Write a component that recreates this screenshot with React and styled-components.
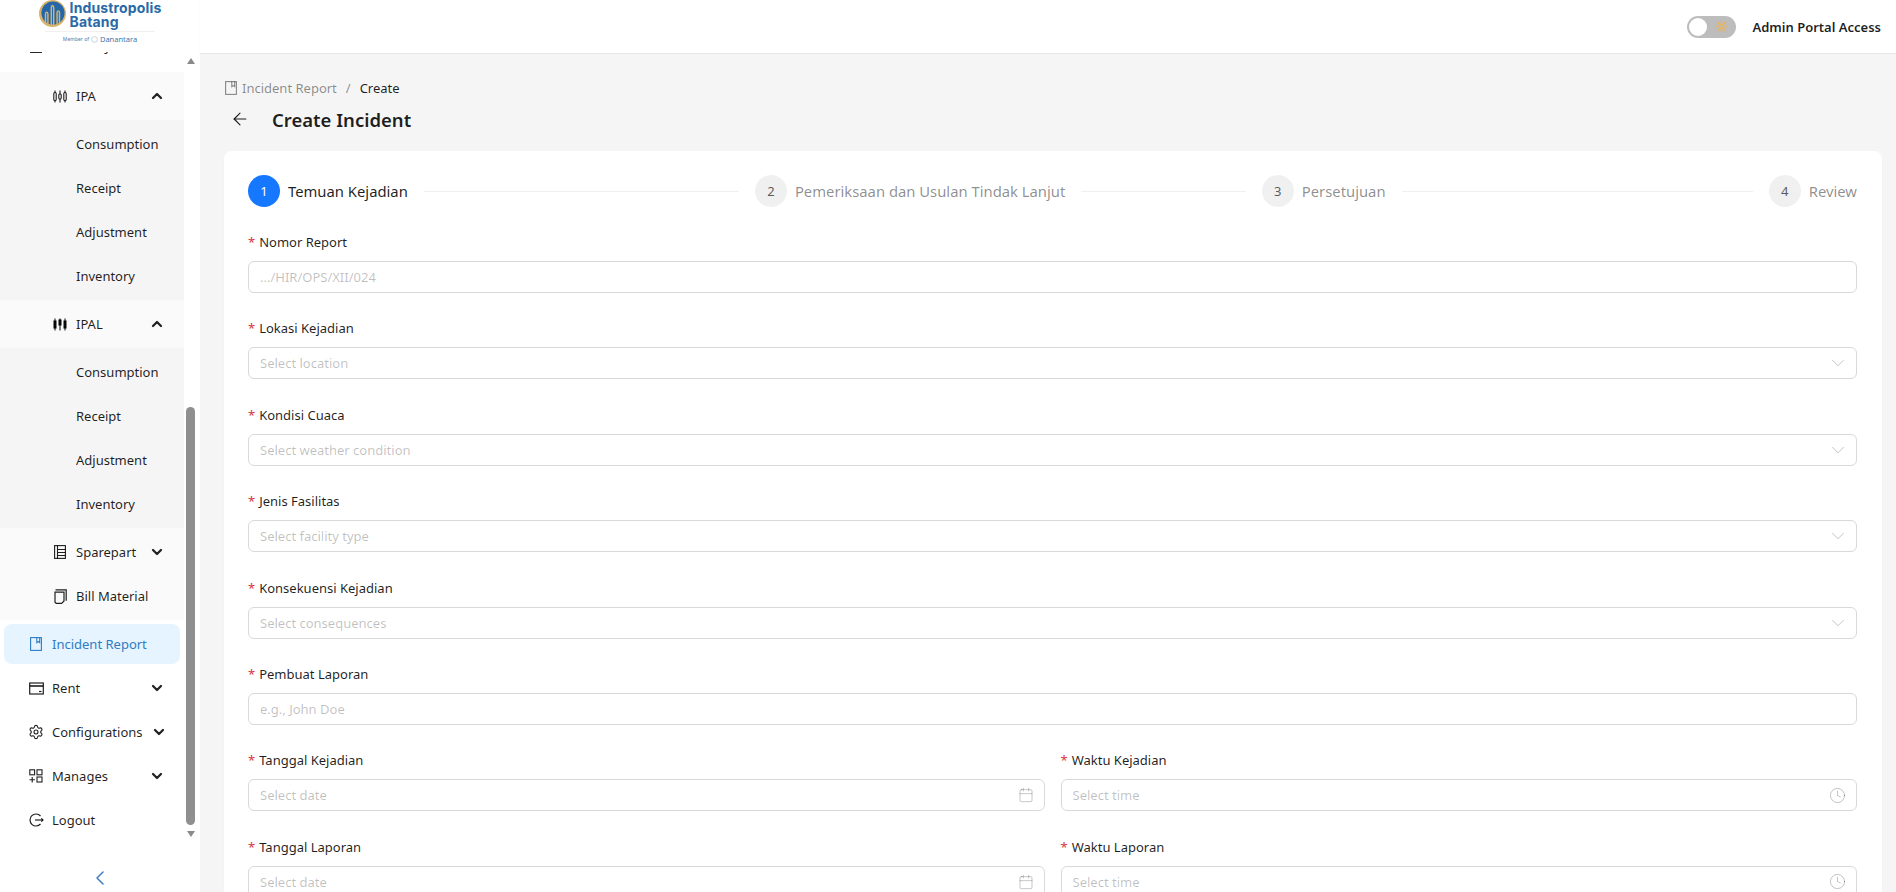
import React from "react";
import styled, { createGlobalStyle } from "styled-components";
import { ChevronDown, ChevronUp, ChevronLeft, ArrowLeft, Settings, Calendar, Clock, Sun } from "lucide-react";

const GlobalStyle = createGlobalStyle`
  html, body {
    margin: 0;
    padding: 0;
    height: 100%;
    overflow: hidden;
    font-family: "Noto Sans", "Open Sans", sans-serif;
    font-size: 13px;
    color: rgba(0, 0, 0, 0.88);
    background: #f5f5f5;
  }
  * { box-sizing: border-box; }
`;

const Page = styled.div`
  display: flex;
  width: 1896px;
  height: 892px;
  overflow: hidden;
`;

/* sidebar */
const Sidebar = styled.aside`
  width: 200px;
  flex-shrink: 0;
  display: flex;
  flex-direction: column;
  background: #fff;
`;

const LogoBox = styled.div`
  height: 52px;
  flex-shrink: 0;
  display: flex;
  flex-direction: column;
  align-items: center;
  overflow: hidden;
`;

const LogoRow = styled.div`
  display: flex;
  align-items: flex-start;
  gap: 4px;
  height: 31px;
`;

const LogoText = styled.div`
  padding-top: 1px;
  font-family: "Inter", sans-serif;
  font-weight: 700;
  font-size: 14px;
  line-height: 13.5px;
  letter-spacing: 0.15px;
  color: #2a6aa6;
`;

const LogoMember = styled.div`
  width: 110px;
  padding-top: 1px;
  display: flex;
  align-items: center;
  justify-content: center;
  gap: 2px;
  border-top: 1px solid #f0f0f0;
  font-size: 5px;
  line-height: 12px;
  color: #4a7aa8;
  white-space: nowrap;

  b {
    font-size: 7.5px;
    font-weight: 400;
    color: #3b78ad;
  }
`;

const MenuArea = styled.div`
  flex: 1;
  display: flex;
  min-height: 0;
`;

const MenuClip = styled.div`
  width: 184px;
  overflow: hidden;
`;

const MenuList = styled.div`
  margin-top: -26px;
`;

const Rail = styled.div`
  width: 16px;
  display: flex;
  flex-direction: column;
  align-items: center;
  padding: 6px 6px 0 3px;
`;

const RailArrow = styled.div`
  width: 0;
  height: 0;
  border-left: 4px solid transparent;
  border-right: 4px solid transparent;
  ${p => (p.$down ? "border-top: 6px solid #8a8a8a;" : "border-bottom: 6px solid #8a8a8a;")}
`;

const RailThumb = styled.div`
  width: 9px;
  height: 418px;
  margin: 343px 0 6px;
  border-radius: 5px;
  background: #8f8f8f;
`;

const Row = styled.div`
  height: 40px;
  margin: 0 4px 4px;
  padding: 0 16px 0 24px;
  display: flex;
  align-items: center;
  gap: 8px;
  border-radius: 8px;
  white-space: nowrap;
  color: ${p => (p.$active ? "#2f7cc4" : "rgba(0,0,0,0.88)")};
  background: ${p => (p.$active ? "#e6f4ff" : "transparent")};
`;

const RowLabel = styled.span`
  flex: 1;
`;

const IconSlot = styled.span`
  width: 16px;
  height: 16px;
  flex-shrink: 0;
  display: flex;
  align-items: center;
  justify-content: center;
`;

const SubGroup = styled.div`
  margin: 6px 0 4px;
  background: #fafafa;
`;

const SubHead = styled.div`
  height: 48px;
  padding: 0 20px 0 52px;
  display: flex;
  align-items: center;
  gap: 8px;
`;

const SubItems = styled.div`
  display: flex;
  flex-direction: column;
  gap: 4px;
  padding: 4px 0;
  background: #f5f5f5;
`;

const SubItem = styled.div`
  height: 40px;
  padding-left: 76px;
  display: flex;
  align-items: center;
`;

const NestedRow = styled.div`
  height: 40px;
  padding: 0 20px 0 52px;
  display: flex;
  align-items: center;
  gap: 8px;
`;

const NestedList = styled.div`
  display: flex;
  flex-direction: column;
  gap: 4px;
  padding: 4px 0;
`;

const Collapse = styled.div`
  height: 45px;
  flex-shrink: 0;
  display: flex;
  align-items: flex-start;
  justify-content: center;
  padding-top: 19px;
  color: #3f7fbd;
`;

const Arrow = styled.span`
  display: flex;
  width: 16px;
  margin-right: -1px;
  flex-shrink: 0;
  color: #222;
`;

/* main */
const Main = styled.div`
  flex: 1;
  min-width: 0;
  display: flex;
  flex-direction: column;
`;

const Topbar = styled.header`
  height: 54px;
  flex-shrink: 0;
  display: flex;
  align-items: center;
  justify-content: flex-end;
  gap: 16px;
  padding: 0 15px 0 0;
  background: #fff;
  border-bottom: 1px solid #e8e8e8;
  box-shadow: 0 1px 2px rgba(0, 0, 0, 0.03);
`;

const Toggle = styled.div`
  width: 49px;
  height: 22px;
  padding: 2px;
  display: flex;
  align-items: center;
  justify-content: space-between;
  border-radius: 11px;
  background: #bdbdbd;
`;

const ToggleKnob = styled.span`
  width: 18px;
  height: 18px;
  border-radius: 50%;
  background: #fff;
`;

const ToggleIcon = styled.span`
  display: flex;
  margin-right: 6px;
  color: #e8b45c;
`;

const AdminLabel = styled.span`
  font-weight: 600;
`;

const Content = styled.main`
  flex: 1;
  min-height: 0;
  overflow: hidden;
  padding: 26px 14px 0 24px;
  background: #f5f5f5;
`;

const Crumbs = styled.div`
  height: 16px;
  padding-left: 1px;
  display: flex;
  align-items: center;
  gap: 5px;
  color: rgba(0, 0, 0, 0.45);
`;

const CrumbSep = styled.span`
  margin: 0 4px;
`;

const CrumbNow = styled.span`
  color: rgba(0, 0, 0, 0.88);
`;

const TitleRow = styled.div`
  height: 32px;
  margin: 7px 0 1px;
  display: flex;
  align-items: center;
  padding-left: 6px;
  gap: 22px;
`;

const Title = styled.h1`
  margin: 0;
  font-size: 18.5px;
  font-weight: 600;
`;

const Card = styled.section`
  margin-top: 16px;
  padding: 24px 25px 24px 24px;
  border-radius: 8px 8px 0 0;
  background: #fff;
  box-shadow: 0 1px 2px rgba(0, 0, 0, 0.03);
`;

const Steps = styled.div`
  height: 32px;
  display: flex;
  align-items: center;
  margin-bottom: 24px;
`;

const Step = styled.div`
  flex: ${p => (p.$last ? "none" : "1 1 0")};
  min-width: 0;
  display: flex;
  align-items: center;
  padding-left: ${p => (p.$first ? 0 : 16)}px;
`;

const StepDot = styled.span`
  width: 32px;
  height: 32px;
  margin-right: 8px;
  flex-shrink: 0;
  display: flex;
  align-items: center;
  justify-content: center;
  border-radius: 50%;
  background: ${p => (p.$active ? "#1677ff" : "rgba(0,0,0,0.06)")};
  color: ${p => (p.$active ? "#fff" : "rgba(0,0,0,0.65)")};
`;

const StepTitle = styled.span`
  font-size: 14.8px;
  white-space: nowrap;
  color: ${p => (p.$active ? "rgba(0,0,0,0.88)" : "rgba(0,0,0,0.45)")};
`;

const StepLine = styled.span`
  flex: 1;
  height: 1px;
  margin-left: 16px;
  background: rgba(5, 5, 5, 0.06);
`;

const Field = styled.div`
  flex: 1;
  min-width: 0;
  margin-bottom: 24.4px;
`;

const FieldRow = styled.div`
  display: flex;
  gap: 16px;
`;

const Label = styled.label`
  display: block;
  height: 22px;
  margin-bottom: 8px;
  line-height: 22px;

  &::before {
    content: "*";
    margin-right: 4px;
    color: #d9363e;
  }
`;

const Control = styled.div`
  height: 32px;
  padding: 0 11px;
  display: flex;
  align-items: center;
  justify-content: space-between;
  border: 1px solid #d9d9d9;
  border-radius: 6px;
  background: #fff;
  color: rgba(0, 0, 0, 0.25);
`;

const SelectChevron = styled(ChevronDown)`
  margin-right: -4px;
`;

const PickerIcon = styled.span`
  display: flex;
  margin-right: -1px;
  color: rgba(0, 0, 0, 0.3);
`;

function IpaIcon() {
  return (
    <svg width="14" height="13" viewBox="0 0 14 13" fill="none" stroke="currentColor" strokeWidth="1.1">
      <path d="M2 0.5v12M7 0.5v12M12 0.5v12" />
      <rect x="0.8" y="2.5" width="2.4" height="8" rx="1.1" fill="#fafafa" />
      <rect x="5.8" y="4" width="2.4" height="5" rx="1.1" fill="#fafafa" />
      <rect x="10.8" y="2.5" width="2.4" height="8" rx="1.1" fill="#fafafa" />
    </svg>
  );
}

function IpalIcon() {
  return (
    <svg width="14" height="13" viewBox="0 0 14 13" fill="currentColor" stroke="currentColor" strokeWidth="1.1">
      <path d="M2 0.5v12M7 0.5v12M12 0.5v12" />
      <rect x="1" y="3" width="2" height="7" />
      <rect x="6" y="2" width="2" height="5" />
      <rect x="11" y="3" width="2" height="7" />
    </svg>
  );
}

function ListBookIcon() {
  return (
    <svg width="12" height="14" viewBox="0 0 12 14" fill="none" stroke="currentColor" strokeWidth="1.1">
      <rect x="0.6" y="0.6" width="10.8" height="12.8" />
      <path d="M3.5 0.6v12.8M3.5 4.5h8M3.5 7.5h8M3.5 10.5h8" />
    </svg>
  );
}

function CopyIcon() {
  return (
    <svg width="13" height="15" viewBox="0 0 13 15" fill="none" stroke="currentColor" strokeWidth="1.2">
      <path d="M1.5 0.8h10.7v11" />
      <path d="M1 3.2h9v8.8l-2.4 2.4H2.2L1 13.2z" />
    </svg>
  );
}

function ReportIcon() {
  return (
    <svg width="12" height="14" viewBox="0 0 12 14" fill="none" stroke="currentColor" strokeWidth="1.1">
      <rect x="0.6" y="0.6" width="10.8" height="12.8" />
      <path d="M6.8 0.6v5l1.5-1 1.4 1v-5" />
    </svg>
  );
}

function WalletIcon() {
  return (
    <svg width="15" height="13" viewBox="0 0 15 13" fill="none" stroke="currentColor" strokeWidth="1.2">
      <rect x="0.7" y="1" width="13.6" height="11" />
      <path d="M0.7 4h13.6" strokeWidth="1.6" />
      <path d="M10 9.5h2.5" />
    </svg>
  );
}

function ManageIcon() {
  return (
    <svg width="14" height="14" viewBox="0 0 14 14" fill="none" stroke="currentColor" strokeWidth="1.1">
      <rect x="0.8" y="0.8" width="4.8" height="5" />
      <rect x="8" y="0.8" width="5" height="5" />
      <rect x="8" y="8" width="5" height="5" />
      <path d="M3.2 8v5.5M0.5 10.8h5.400" />
    </svg>
  );
}

function LogoutIcon() {
  return (
    <svg width="15" height="14" viewBox="0 0 15 14" fill="none" stroke="currentColor" strokeWidth="1.2">
      <path d="M11.5 3A6 6 0 1 0 11.5 11" />
      <path d="M6 7h8" />
      <path d="M12.3 5.3L14 7l-1.7 1.7" />
    </svg>
  );
}

function LogoMark() {
  return (
    <svg width="27" height="27" viewBox="0 0 28 28">
      <circle cx="14" cy="14" r="14" fill="#d9b26a" />
      <circle cx="14.5" cy="13.5" r="12" fill="#2467a8" />
      <path d="M6 25V15c0-2 1-3 2-3s2 1 2 3v11H8.5V15c0-1-.2-1.500-.5-1.500s-.5.5-.5 1.500v9.500z" fill="#d9b26a" />
      <path d="M12 26V8.5C12 6.500 13 5 14 5s2 1.500 2 3.500V26h-1.500V8.500c0-1-.2-1.800-.5-1.800s-.5.8-.5 1.800V26z" fill="#d9b26a" />
      <path d="M18 25V13c0-1.500 1-2.500 2-2.500s2 1 2 2.500v10l-1.500 1.500V13c0-.6-.2-1-.5-1s-.5.4-.5 1v12z" fill="#d9b26a" />
    </svg>
  );
}

function MemberRing() {
  return (
    <svg width="7" height="7" viewBox="0 0 7 7" fill="none" stroke="#b9c7d4" strokeWidth="0.8">
      <circle cx="3.5" cy="3.5" r="2.9" />
    </svg>
  );
}

const subItems = ["Consumption", "Receipt", "Adjustment", "Inventory"];

function SubMenu({ icon, title }) {
  return (
    <>
      <SubHead>
        <IconSlot>{icon}</IconSlot>
        <RowLabel>{title}</RowLabel>
        <Arrow><ChevronUp size={16} strokeWidth={3.4} /></Arrow>
      </SubHead>
      <SubItems>
        {subItems.map(name => (
          <SubItem key={name}>{name}</SubItem>
        ))}
      </SubItems>
    </>
  );
}

function Sidenav() {
  const down = <Arrow><ChevronDown size={16} strokeWidth={3.4} /></Arrow>;
  return (
    <Sidebar>
      <LogoBox>
        <LogoRow>
          <LogoMark />
          <LogoText>
            Industropolis
            <br />
            Batang
          </LogoText>
        </LogoRow>
        <LogoMember>Member of <MemberRing /> <b>Danantara</b></LogoMember>
      </LogoBox>
      <MenuArea>
        <MenuClip>
          <MenuList>
            <Row>
              <IconSlot><ListBookIcon /></IconSlot>
              <RowLabel>Inventory</RowLabel>
            </Row>
            <SubGroup>
              <SubMenu icon={<IpaIcon />} title="IPA" />
              <SubMenu icon={<IpalIcon />} title="IPAL" />
              <NestedList>
                <NestedRow>
                  <IconSlot><ListBookIcon /></IconSlot>
                  <RowLabel>Sparepart</RowLabel>
                  {down}
                </NestedRow>
                <NestedRow>
                  <IconSlot><CopyIcon /></IconSlot>
                  <RowLabel>Bill Material</RowLabel>
                </NestedRow>
              </NestedList>
            </SubGroup>
            <Row $active>
              <IconSlot><ReportIcon /></IconSlot>
              <RowLabel>Incident Report</RowLabel>
            </Row>
            <Row>
              <IconSlot><WalletIcon /></IconSlot>
              <RowLabel>Rent</RowLabel>
              {down}
            </Row>
            <Row>
              <IconSlot><Settings size={16} strokeWidth={1.6} /></IconSlot>
              <RowLabel>Configurations</RowLabel>
              {down}
            </Row>
            <Row>
              <IconSlot><ManageIcon /></IconSlot>
              <RowLabel>Manages</RowLabel>
              {down}
            </Row>
            <Row>
              <IconSlot><LogoutIcon /></IconSlot>
              <RowLabel>Logout</RowLabel>
            </Row>
          </MenuList>
        </MenuClip>
        <Rail>
          <RailArrow />
          <RailThumb />
          <RailArrow $down />
        </Rail>
      </MenuArea>
      <Collapse><ChevronLeft size={24} strokeWidth={1.5} /></Collapse>
    </Sidebar>
  );
}

function Input({ label, placeholder, icon }) {
  return (
    <Field>
      <Label>{label}</Label>
      <Control>
        {placeholder}
        {icon}
      </Control>
    </Field>
  );
}

const chevron = <SelectChevron size={22} strokeWidth={1} />;
const calendar = <PickerIcon><Calendar size={16} strokeWidth={1.1} /></PickerIcon>;
const clock = <PickerIcon><Clock size={17} strokeWidth={1.1} /></PickerIcon>;

const steps = ["Pemeriksaan dan Usulan Tindak Lanjut", "Persetujuan", "Review"];

export default function App() {
  return (
    <Page>
      <GlobalStyle />
      <Sidenav />
      <Main>
        <Topbar>
          <Toggle>
            <ToggleKnob />
            <ToggleIcon><Sun size={13} strokeWidth={3} /></ToggleIcon>
          </Toggle>
          <AdminLabel>Admin Portal Access</AdminLabel>
        </Topbar>
        <Content>
          <Crumbs>
            <ReportIcon />
            Incident Report
            <CrumbSep>/</CrumbSep>
            <CrumbNow>Create</CrumbNow>
          </Crumbs>
          <TitleRow>
            <ArrowLeft size={20} strokeWidth={1.4} />
            <Title>Create Incident</Title>
          </TitleRow>
          <Card>
            <Steps>
              <Step $first>
                <StepDot $active>1</StepDot>
                <StepTitle $active>Temuan Kejadian</StepTitle>
                <StepLine />
              </Step>
              {steps.map((name, i) => (
                <Step key={name} $last={i === steps.length - 1}>
                  <StepDot>{i + 2}</StepDot>
                  <StepTitle>{name}</StepTitle>
                  {i < steps.length - 1 && <StepLine />}
                </Step>
              ))}
            </Steps>
            <Input label="Nomor Report" placeholder=".../HIR/OPS/XII/024" />
            <Input label="Lokasi Kejadian" placeholder="Select location" icon={chevron} />
            <Input label="Kondisi Cuaca" placeholder="Select weather condition" icon={chevron} />
            <Input label="Jenis Fasilitas" placeholder="Select facility type" icon={chevron} />
            <Input label="Konsekuensi Kejadian" placeholder="Select consequences" icon={chevron} />
            <Input label="Pembuat Laporan" placeholder="e.g., John Doe" />
            <FieldRow>
              <Input label="Tanggal Kejadian" placeholder="Select date" icon={calendar} />
              <Input label="Waktu Kejadian" placeholder="Select time" icon={clock} />
            </FieldRow>
            <FieldRow>
              <Input label="Tanggal Laporan" placeholder="Select date" icon={calendar} />
              <Input label="Waktu Laporan" placeholder="Select time" icon={clock} />
            </FieldRow>
          </Card>
        </Content>
      </Main>
    </Page>
  );
}
